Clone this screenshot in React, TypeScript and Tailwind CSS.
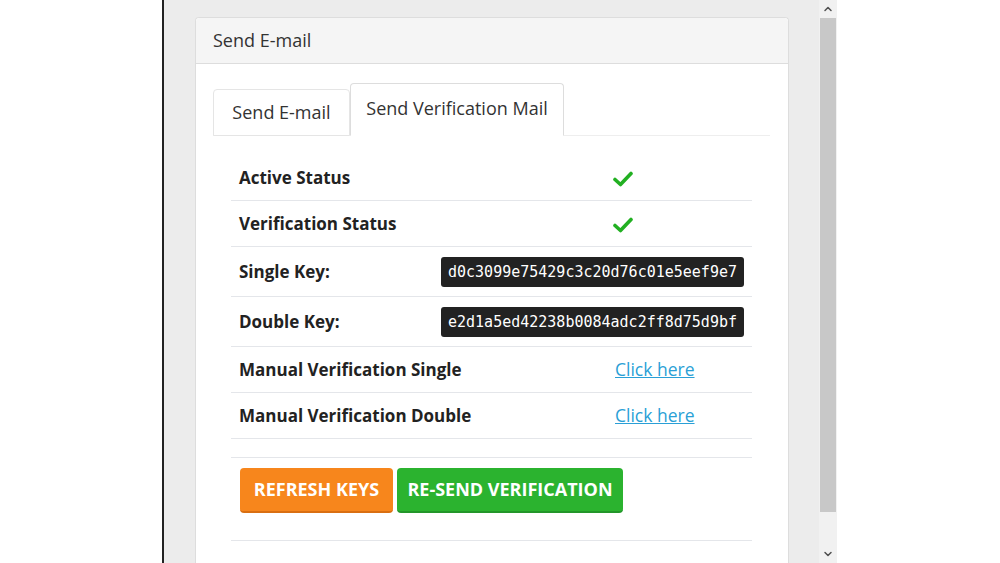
import React from 'react';
import { ChevronUp, ChevronDown } from 'lucide-react';

const font = { fontFamily: '"Open Sans", "Noto Sans", sans-serif' };

const Check = () => (
  <svg width="20" height="16" viewBox="0 0 20 16" className="inline-block">
    <path d="M2 8.5 L7.5 13.5 L18 2.5" fill="none" stroke="#22b022" strokeWidth="3.6" strokeLinecap="round" strokeLinejoin="round" />
  </svg>
);

const KeyBadge = ({ value }: { value: string }) => (
  <span className="inline-block rounded-[3px] bg-[#222222] px-[7px] h-[30px] leading-[30px] text-[15px] text-white" style={{ fontFamily: '"DejaVu Sans Mono", monospace' }}>
    {value}
  </span>
);

const rows: { label: string; value: React.ReactNode; h: string; kind: 'check' | 'key' | 'link' }[] = [
  { label: 'Active Status', value: <Check />, h: 'h-[46px]', kind: 'check' },
  { label: 'Verification Status', value: <Check />, h: 'h-[46px]', kind: 'check' },
  { label: 'Single Key:', value: <KeyBadge value="d0c3099e75429c3c20d76c01e5eef9e7" />, h: 'h-[50px]', kind: 'key' },
  { label: 'Double Key:', value: <KeyBadge value="e2d1a5ed42238b0084adc2ff8d75d9bf" />, h: 'h-[50px]', kind: 'key' },
  { label: 'Manual Verification Single', value: <a href="#" className="underline text-[#2a9fd6]">Click here</a>, h: 'h-[46px]', kind: 'link' },
  { label: 'Manual Verification Double', value: <a href="#" className="underline text-[#2a9fd6]">Click here</a>, h: 'h-[46px]', kind: 'link' },
];

export default function App() {
  return (
    <div className="flex h-[563px] w-[1000px] overflow-hidden bg-white text-[#333]" style={font}>
      <div className="w-[162px] shrink-0 bg-white" />
      <div className="w-[2px] shrink-0 bg-[#222]" />
      <div className="flex w-[655px] shrink-0 flex-col bg-[#ececec] pl-[31px] pr-[30px] pt-[17px]">
        <div className="flex flex-1 flex-col rounded-t-[4px] border border-b-0 border-[#dddddd] bg-white">
          <div className="flex h-[46px] items-center rounded-t-[4px] border-b border-[#dddddd] bg-[#f5f5f5] px-[17px] text-[18px] text-[#333]">
            Send E-mail
          </div>
          <div className="px-[17px] pt-[19px]">
            <div className="flex w-[557px] items-end border-b border-[#eeeeee]">
              <div className="-mb-px flex h-[47px] w-[137px] items-center justify-center rounded-t-[4px] border border-[#e5e5e5] bg-white text-[18px] text-[#333]">
                Send E-mail
              </div>
              <div className="-mb-px flex h-[53px] w-[214px] items-start justify-center rounded-t-[4px] border border-b-white border-[#dddddd] bg-white pt-[11px] text-[18px] text-[#333]">
                Send Verification Mail
              </div>
            </div>
            <div className="ml-[18px] w-[521px] pt-[19px]">
              {rows.map((r) => (
                <div key={r.label} className={`flex items-center border-b border-[#e4e6ea] ${r.h}`}>
                  <div className="w-[201px] shrink-0 whitespace-nowrap pl-[8px] text-[17px] font-bold text-[#222]">{r.label}</div>
                  <div className="flex flex-1 items-center">
                    {r.kind === 'check' && <div className="pl-[181px]">{r.value}</div>}
                    {r.kind === 'key' && <div className="pl-[9px]">{r.value}</div>}
                    {r.kind === 'link' && <div className="pl-[183px] text-[17.5px]">{r.value}</div>}
                  </div>
                </div>
              ))}
              <div className="mt-[18px] border-t border-[#e4e6ea] pb-[27px] pl-[9px] pt-[10px]">
                <div className="flex gap-[4px]">
                  <button className="h-[45px] w-[153px] rounded-[4px] border-b-2 border-[#d96f12] bg-[#f7861c] text-[18px] font-bold uppercase text-white">
                    Refresh Keys
                  </button>
                  <button className="h-[45px] w-[226px] rounded-[4px] border-b-2 border-[#23962a] bg-[#2bb32f] text-[18px] font-bold uppercase text-white">
                    Re-send Verification
                  </button>
                </div>
              </div>
              <div className="border-t border-[#e4e6ea]" />
            </div>
          </div>
        </div>
      </div>
      <div className="flex w-[18px] shrink-0 flex-col bg-[#f1f1f1]">
        <div className="flex h-[18px] items-center justify-center text-[#505050]">
          <ChevronUp size={12} strokeWidth={3} />
        </div>
        <div className="mx-[1px] h-[494px] bg-[#c8c8c8]" />
        <div className="flex-1" />
        <div className="flex h-[18px] items-center justify-center text-[#505050]">
          <ChevronDown size={12} strokeWidth={3} />
        </div>
      </div>
      <div className="flex-1 bg-white" />
    </div>
  );
}
